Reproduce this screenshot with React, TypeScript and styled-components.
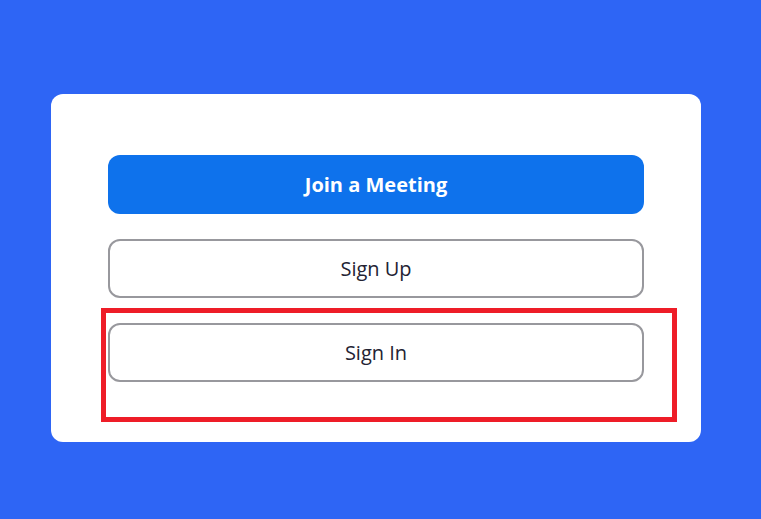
import React from 'react';
import styled, { createGlobalStyle } from 'styled-components';

const GlobalStyle = createGlobalStyle`
  html, body {
    margin: 0;
    padding: 0;
    background: #2e65f5;
  }
  * { box-sizing: border-box; }
`;

const Page = styled.div`
  width: 761px;
  height: 519px;
  background: #2e65f5;
  padding: 94px 60px 0 51px;
  font-family: 'Open Sans', 'Noto Sans', 'Liberation Sans', sans-serif;
`;

const Card = styled.div`
  position: relative;
  width: 650px;
  height: 348px;
  background: #ffffff;
  border-radius: 12px;
  padding: 61px 57px 0;
  display: flex;
  flex-direction: column;
  gap: 25px;
`;

const Button = styled.button<{ primary?: boolean }>`
  width: 536px;
  height: 59px;
  border-radius: 12px;
  font-family: inherit;
  font-size: 20px;
  cursor: pointer;
  display: flex;
  align-items: center;
  justify-content: center;
  background: ${p => (p.primary ? '#0e72ec' : '#ffffff')};
  color: ${p => (p.primary ? '#ffffff' : '#232333')};
  font-weight: ${p => (p.primary ? 700 : 400)};
  border: ${p => (p.primary ? 'none' : '2px solid #98989d')};
`;

const Highlight = styled.div`
  position: absolute;
  left: 50px;
  top: 214px;
  width: 576px;
  height: 114px;
  border: 5px solid #ee1d28;
  pointer-events: none;
`;

export default function App() {
  return (
    <>
      <GlobalStyle />
      <Page>
        <Card>
          <Button primary>Join a Meeting</Button>
          <Button>Sign Up</Button>
          <Button>Sign In</Button>
          <Highlight />
        </Card>
      </Page>
    </>
  );
}
